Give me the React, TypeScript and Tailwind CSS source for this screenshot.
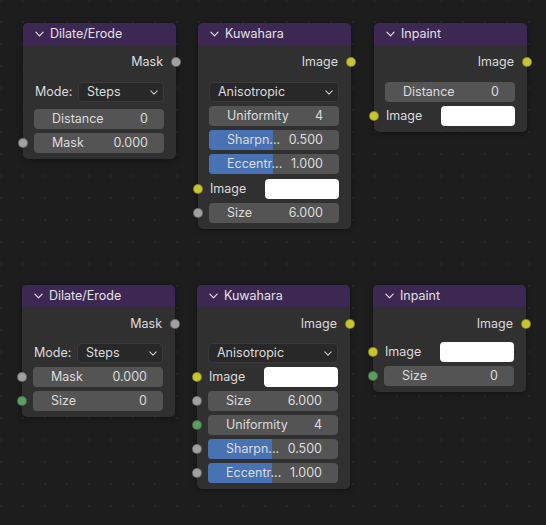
import React from "react";

type SocketColor = "gray" | "yellow" | "green";

type Row =
  | { kind: "output"; label: string; socket: SocketColor }
  | { kind: "select"; label?: string; value: string; mt?: number }
  | {
      kind: "number";
      label: string;
      value: string;
      socket?: SocketColor;
      fill?: number;
      mt?: number;
    }
  | { kind: "color"; label: string; socket: SocketColor; mt?: number };

interface NodeDef {
  title: string;
  x: number;
  y: number;
  rows: Row[];
}

const SOCKET_BG: Record<SocketColor, string> = {
  gray: "bg-[#a1a1a1]",
  yellow: "bg-[#c7c729]",
  green: "bg-[#5d9e5f]",
};

const NODES: NodeDef[] = [
  {
    title: "Dilate/Erode",
    x: 23,
    y: 23,
    rows: [
      { kind: "output", label: "Mask", socket: "gray" },
      { kind: "select", label: "Mode:", value: "Steps", mt: 10 },
      { kind: "number", label: "Distance", value: "0", mt: 7 },
      { kind: "number", label: "Mask", value: "0.000", socket: "gray" },
    ],
  },
  {
    title: "Kuwahara",
    x: 198,
    y: 23,
    rows: [
      { kind: "output", label: "Image", socket: "yellow" },
      { kind: "select", value: "Anisotropic", mt: 10 },
      { kind: "number", label: "Uniformity", value: "4" },
      { kind: "number", label: "Sharpn...", value: "0.500", fill: 0.49 },
      { kind: "number", label: "Eccentr...", value: "1.000", fill: 0.49 },
      { kind: "color", label: "Image", socket: "yellow", mt: 5 },
      { kind: "number", label: "Size", value: "6.000", socket: "gray" },
    ],
  },
  {
    title: "Inpaint",
    x: 374,
    y: 23,
    rows: [
      { kind: "output", label: "Image", socket: "yellow" },
      { kind: "number", label: "Distance", value: "0", mt: 10 },
      { kind: "color", label: "Image", socket: "yellow" },
    ],
  },
  {
    title: "Dilate/Erode",
    x: 22,
    y: 285,
    rows: [
      { kind: "output", label: "Mask", socket: "gray" },
      { kind: "select", label: "Mode:", value: "Steps", mt: 9 },
      { kind: "number", label: "Mask", value: "0.000", socket: "gray" },
      { kind: "number", label: "Size", value: "0", socket: "green" },
    ],
  },
  {
    title: "Kuwahara",
    x: 197,
    y: 285,
    rows: [
      { kind: "output", label: "Image", socket: "yellow" },
      { kind: "select", value: "Anisotropic", mt: 9 },
      { kind: "color", label: "Image", socket: "yellow" },
      { kind: "number", label: "Size", value: "6.000", socket: "gray" },
      { kind: "number", label: "Uniformity", value: "4", socket: "green" },
      {
        kind: "number",
        label: "Sharpn...",
        value: "0.500",
        socket: "gray",
        fill: 0.49,
      },
      {
        kind: "number",
        label: "Eccentr...",
        value: "1.000",
        socket: "gray",
        fill: 0.49,
      },
    ],
  },
  {
    title: "Inpaint",
    x: 373,
    y: 285,
    rows: [
      { kind: "output", label: "Image", socket: "yellow" },
      { kind: "color", label: "Image", socket: "yellow", mt: 8 },
      { kind: "number", label: "Size", value: "0", socket: "green" },
    ],
  },
];

const Chevron = ({ className }: { className?: string }) => (
  <svg
    viewBox="0 0 10 6"
    className={className}
    fill="none"
    stroke="currentColor"
    strokeWidth={1.3}
    strokeLinecap="round"
    strokeLinejoin="round"
  >
    <path d="M1 1 L5 5 L9 1" />
  </svg>
);

const Socket = ({ color, side }: { color: SocketColor; side: "left" | "right" }) => (
  <span
    className={`absolute top-1/2 -translate-y-1/2 w-[10px] h-[10px] rounded-full border border-[#222]/40 ${SOCKET_BG[color]} ${
      side === "left" ? "-left-[16px]" : "-right-[17px]"
    }`}
  />
);

const NodeRow = ({ row }: { row: Row }) => {
  const mt = "mt" in row && row.mt ? row.mt : row.kind === "output" ? 0 : 4;
  if (row.kind === "output") {
    return (
      <div className="relative h-5 flex items-center justify-end pr-[1px]">
        <span>{row.label}</span>
        <Socket color={row.socket} side="right" />
      </div>
    );
  }
  if (row.kind === "select") {
    return (
      <div className="relative h-5 flex items-center" style={{ marginTop: mt }}>
        {row.label && <span className="pl-[1px] w-[44px] shrink-0">{row.label}</span>}
        <div className="flex-1 h-5 flex items-center justify-between rounded-[4px] bg-[#282828] border border-[#3a3a3a] pl-[8px] pr-[5px]">
          <span>{row.value}</span>
          <Chevron className="w-[8px] h-[5px] text-[#cfcfcf]" />
        </div>
      </div>
    );
  }
  if (row.kind === "color") {
    return (
      <div className="relative h-5 flex items-center justify-between" style={{ marginTop: mt }}>
        <span className="pl-[1px]">{row.label}</span>
        <div className="w-[74px] h-5 rounded-[4px] bg-white" />
        <Socket color={row.socket} side="left" />
      </div>
    );
  }
  return (
    <div className="relative h-5" style={{ marginTop: mt }}>
      <div className="relative h-5 rounded-[4px] bg-[#545454] overflow-hidden flex items-center justify-between pl-[18px] pr-[16px]">
        {row.fill !== undefined && (
          <div
            className="absolute left-0 top-0 bottom-0 bg-[#4772b3]"
            style={{ width: `${row.fill * 100}%` }}
          />
        )}
        <span className="relative">{row.label}</span>
        <span className="relative">{row.value}</span>
      </div>
      {row.socket && <Socket color={row.socket} side="left" />}
    </div>
  );
};

const Node = ({ node }: { node: NodeDef }) => (
  <div
    className="absolute w-[153px] rounded-[5px] bg-[#303030] shadow-[0_1px_6px_rgba(0,0,0,0.4)]"
    style={{ left: node.x, top: node.y }}
  >
    <div className="h-[22px] rounded-t-[5px] bg-[#3d2853] flex items-center pl-[12px] gap-[6px] text-[#e2e2e2]">
      <Chevron className="w-[9px] h-[6px]" />
      <span>{node.title}</span>
    </div>
    <div className="pt-[7px] pb-[6px] pl-[11px] pr-[12px] text-[#dcdcdc]">
      {node.rows.map((row, i) => (
        <NodeRow key={i} row={row} />
      ))}
    </div>
  </div>
);

export default function App() {
  return (
    <div
      className="relative w-[546px] h-[525px] overflow-hidden bg-[#1d1d1d] bg-[radial-gradient(circle,#262626_1px,transparent_1.2px)] bg-[size:22px_22px] bg-[position:-10px_-11px] text-[12.5px] leading-none"
      style={{ fontFamily: "Inter, 'DejaVu Sans', sans-serif" }}
    >
      {NODES.map((node, i) => (
        <Node key={i} node={node} />
      ))}
    </div>
  );
}
